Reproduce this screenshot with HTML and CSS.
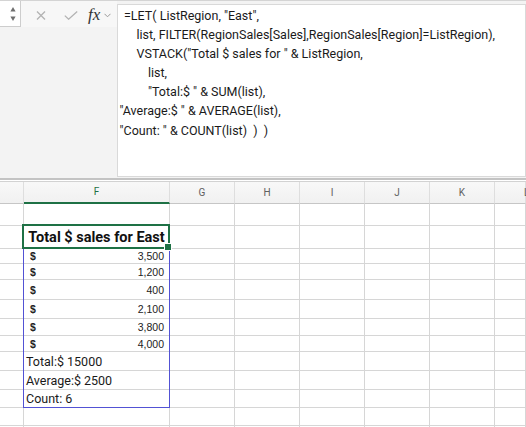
FILE: index.html
```html
<!DOCTYPE html>
<html>
<head>
<meta charset="utf-8">
<link rel="stylesheet" href="styles.css">
</head>
<body>
<div class="fbar">
  <div class="fbar-left">
    <div class="toolbar">
      <div class="namebox">
        <svg class="spin" width="6" height="16" viewBox="0 0 6 16"><path d="M3 1 L5.6 5.5 H0.4 Z" fill="#6e6e6e"/><path d="M3 15 L5.6 10.5 H0.4 Z" fill="#6e6e6e"/></svg>
      </div>
      <svg class="ico-x" width="10" height="9" viewBox="0 0 10 9"><path d="M1 0.5 L9 8.5 M9 0.5 L1 8.5" stroke="#b3b3b3" stroke-width="1.3" fill="none"/></svg>
      <svg class="ico-check" width="14" height="9" viewBox="0 0 14 9"><path d="M0.8 4.6 L4.6 8.2 L13.2 0.6" stroke="#b3b3b3" stroke-width="1.3" fill="none"/></svg>
      <span class="fx">fx</span>
      <svg class="ico-chev" width="7" height="5" viewBox="0 0 7 5"><path d="M0.5 0.8 L3.5 3.8 L6.5 0.8" stroke="#9a9a9a" stroke-width="1" fill="none"/></svg>
    </div>
  </div>
  <div class="formula">
    <div class="fl l1">=LET( ListRegion, "East",</div>
    <div class="fl l2">list, FILTER(RegionSales[Sales],RegionSales[Region]=ListRegion),</div>
    <div class="fl l2">VSTACK("Total $ sales for " &amp; ListRegion,</div>
    <div class="fl l3">list,</div>
    <div class="fl l3">"Total:$ " &amp; SUM(list),</div>
    <div class="fl">"Average:$ " &amp; AVERAGE(list),</div>
    <div class="fl">"Count: " &amp; COUNT(list)&nbsp; )&nbsp; )</div>
  </div>
</div>
<div class="sep"></div>
<div class="sheet">
  <div class="h"></div><div class="h hsel">F</div><div class="h">G</div><div class="h">H</div><div class="h">I</div><div class="h">J</div><div class="h">K</div><div class="h hl">L</div>

  <div class="c"></div><div class="c"></div><div class="c"></div><div class="c"></div><div class="c"></div><div class="c"></div><div class="c"></div><div class="c"></div>

  <div class="c"></div><div class="c title">Total $ sales for East</div><div class="c"></div><div class="c"></div><div class="c"></div><div class="c"></div><div class="c"></div><div class="c"></div>

  <div class="c"></div><div class="c acc"><span class="cur">$</span><span>3,500</span></div><div class="c"></div><div class="c"></div><div class="c"></div><div class="c"></div><div class="c"></div><div class="c"></div>

  <div class="c"></div><div class="c acc"><span class="cur">$</span><span>1,200</span></div><div class="c"></div><div class="c"></div><div class="c"></div><div class="c"></div><div class="c"></div><div class="c"></div>

  <div class="c"></div><div class="c acc"><span class="cur">$</span><span>400</span></div><div class="c"></div><div class="c"></div><div class="c"></div><div class="c"></div><div class="c"></div><div class="c"></div>

  <div class="c"></div><div class="c acc"><span class="cur">$</span><span>2,100</span></div><div class="c"></div><div class="c"></div><div class="c"></div><div class="c"></div><div class="c"></div><div class="c"></div>

  <div class="c"></div><div class="c acc"><span class="cur">$</span><span>3,800</span></div><div class="c"></div><div class="c"></div><div class="c"></div><div class="c"></div><div class="c"></div><div class="c"></div>

  <div class="c"></div><div class="c acc"><span class="cur">$</span><span>4,000</span></div><div class="c"></div><div class="c"></div><div class="c"></div><div class="c"></div><div class="c"></div><div class="c"></div>

  <div class="c"></div><div class="c txt">Total:$ 15000</div><div class="c"></div><div class="c"></div><div class="c"></div><div class="c"></div><div class="c"></div><div class="c"></div>

  <div class="c"></div><div class="c txt">Average:$ 2500</div><div class="c"></div><div class="c"></div><div class="c"></div><div class="c"></div><div class="c"></div><div class="c"></div>

  <div class="c"></div><div class="c txt">Count: 6</div><div class="c"></div><div class="c"></div><div class="c"></div><div class="c"></div><div class="c"></div><div class="c"></div>

  <div class="c"></div><div class="c"></div><div class="c"></div><div class="c"></div><div class="c"></div><div class="c"></div><div class="c"></div><div class="c"></div>

  <div class="c"></div><div class="c"></div><div class="c"></div><div class="c"></div><div class="c"></div><div class="c"></div><div class="c"></div><div class="c"></div>

  <div class="spill"></div>
  <div class="active"></div>
</div>
</body>
</html>
```
FILE: styles.css
```css
* { box-sizing: border-box; }
html, body { margin: 0; padding: 0; }
body {
  width: 526px;
  height: 427px;
  overflow: hidden;
  background: #ffffff;
  font-family: Roboto, "Liberation Sans", sans-serif;
  color: #1f1f1f;
}

/* formula bar */
.fbar {
  display: flex;
  height: 178px;
  background: #f3f3f3;
  border-top: 1px solid #d4d4d4;
}
.fbar-left {
  width: 117px;
  flex: none;
}
.toolbar {
  display: flex;
  align-items: center;
  height: 26px;
  background: #f7f7f7;
}
.namebox {
  width: 21px;
  height: 26px;
  background: #ffffff;
  border-right: 1px solid #cdcdcd;
  border-bottom: 1px solid #cdcdcd;
  display: flex;
  align-items: center;
  justify-content: flex-end;
  padding-right: 4px;
}
.spin { display: block; }
.ico-x { margin-left: 15px; margin-top: 3px; }
.ico-check { margin-left: 18px; margin-top: 3px; }
.fx {
  margin-left: 10px;
  font-family: "Liberation Serif", "DejaVu Serif", serif;
  font-style: italic;
  font-size: 17px;
  color: #333333;
  line-height: 1;
  margin-top: 1px;
}
.ico-chev { margin-left: 4px; margin-top: 3px; }

.formula {
  flex: 1;
  margin-top: 3px;
  height: 173px;
  background: #ffffff;
  border: 1px solid #d9d9d9;
  padding: 1px 0 0 1.5px;
}
.fl {
  font-size: 12.5px;
  line-height: 19.1px;
  white-space: pre;
  color: #1a1a1a;
}
.l1 { padding-left: 4.5px; }
.l2 { padding-left: 17px; }
.l3 { padding-left: 28.5px; }

.sep {
  height: 4px;
  border-top: 2px solid #c3c3c3;
  border-bottom: 1px solid #d2d2d2;
  background: #ffffff;
}

/* sheet grid */
.sheet {
  position: relative;
  display: grid;
  grid-template-columns: 24px 146px 65px 65px 65px 65px 65px 31px;
  grid-template-rows: 22px 22px 23px 15px 16px 20px 19px 17px 16px 19px 19px 18px 18px 10px;
}
.h {
  background: linear-gradient(#f8f8f8, #f1f1f1);
  border-right: 1px solid #dedede;
  border-bottom: 1px solid #c6c6c6;
  font-size: 10px;
  color: #606060;
  display: flex;
  align-items: center;
  justify-content: center;
  padding-bottom: 1px;
}
.hsel {
  color: #1e7145;
  border-bottom: 2px solid #1e7145;
}
.hl { justify-content: flex-start; padding-left: 29px; }
.c {
  border-right: 1px solid #d6d6d6;
  border-bottom: 1px solid #d6d6d6;
  display: flex;
  align-items: center;
  min-width: 0;
  white-space: nowrap;
}
.title {
  justify-content: center;
  font-weight: 700;
  font-size: 14.5px;
  color: #111111;
}
.acc {
  justify-content: space-between;
  padding: 0 5px 0 6px;
  font-family: "Liberation Sans", Arial, sans-serif;
  font-size: 10.5px;
  color: #222222;
}
.cur { font-weight: 700; }
.txt {
  padding-left: 2px;
  font-size: 12.5px;
  color: #1a1a1a;
}

/* overlays: spill range and active cell, drawn over the grid */
.spill {
  position: absolute;
  grid-column: 2 / 3;
  grid-row: 3 / 13;
  top: -1px;
  left: -1px;
  right: 0;
  bottom: 0;
  border: 1px solid #5252d4;
  pointer-events: none;
  z-index: 1;
}
.active {
  position: absolute;
  grid-column: 2 / 3;
  grid-row: 3 / 4;
  top: -2px;
  left: -2px;
  right: 0;
  bottom: 0;
  border: 2px solid #1e7145;
  pointer-events: none;
  z-index: 2;
}
.active::after {
  content: "";
  position: absolute;
  right: -4px;
  bottom: -4px;
  width: 6px;
  height: 6px;
  background: #1e7145;
  border: 1px solid #ffffff;
}
```
